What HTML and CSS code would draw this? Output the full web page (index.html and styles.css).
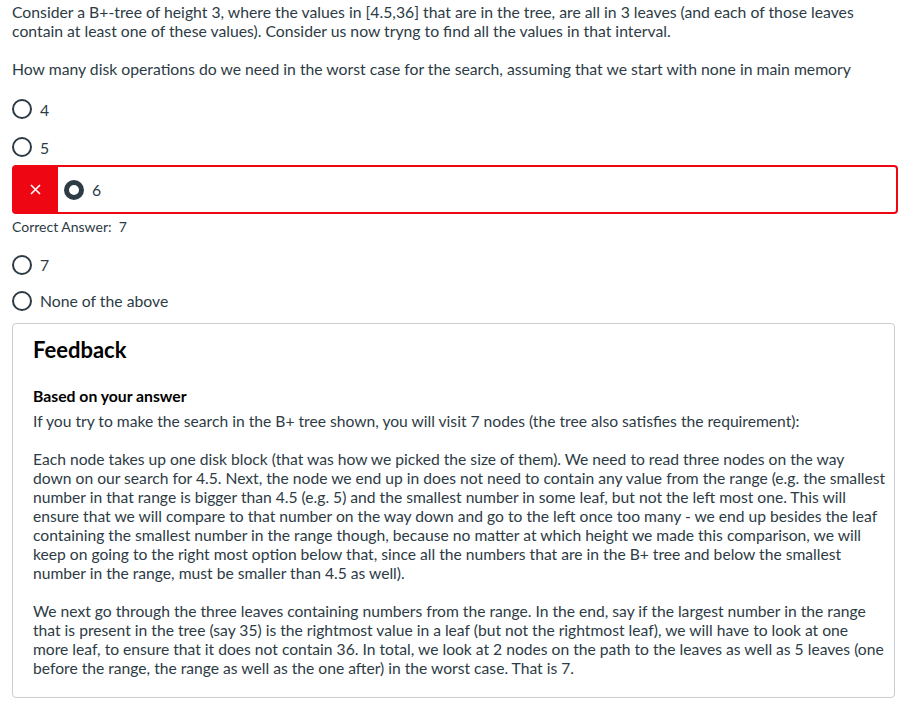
FILE: index.html
```html
<!DOCTYPE html>
<html>
<head>
<meta charset="utf-8">
<link rel="stylesheet" href="styles.css">
</head>
<body>
<div class="quiz">
  <div class="question">
    <p>Consider a B+-tree of height 3, where the values in [4.5,36] that are in the tree, are all in 3 leaves (and each of those leaves contain at least one of these values). Consider us now tryng to find all the values in that interval.</p>
    <p>How many disk operations do we need in the worst case for the search, assuming that we start with none in main memory</p>
  </div>
  <div class="answers">
    <div class="option"><span class="radio"></span><span class="label">4</span></div>
    <div class="option"><span class="radio"></span><span class="label">5</span></div>
    <div class="option wrong">
      <span class="mark"><svg width="11" height="11" viewBox="0 0 11 11"><path d="M1 1 L10 10 M10 1 L1 10" stroke="#ffffff" stroke-width="1.6" fill="none"/></svg></span>
      <span class="radio checked"></span><span class="label">6</span>
    </div>
    <div class="correct">Correct Answer:&nbsp; 7</div>
    <div class="option tight"><span class="radio"></span><span class="label">7</span></div>
    <div class="option tighter"><span class="radio"></span><span class="label">None of the above</span></div>
  </div>
  <div class="feedback">
    <h2>Feedback</h2>
    <h3>Based on your answer</h3>
    <p>If you try to make the search in the B+ tree shown, you will visit 7 nodes (the tree also satisfies the requirement):</p>
    <p>Each node takes up one disk block (that was how we picked the size of them). We need to read three nodes on the way<br>down on our search for 4.5. Next, the node we end up in does not need to contain any value from the range (e.g. the smallest<br>number in that range is bigger than 4.5 (e.g. 5) and the smallest number in some leaf, but not the left most one. This will<br>ensure that we will compare to that number on the way down and go to the left once too many - we end up besides the leaf<br>containing the smallest number in the range though, because no matter at which height we made this comparison, we will<br>keep on going to the right most option below that, since all the numbers that are in the B+ tree and below the smallest<br>number in the range, must be smaller than 4.5 as well).</p>
    <p>We next go through the three leaves containing numbers from the range. In the end, say if the largest number in the range<br>that is present in the tree (say 35) is the rightmost value in a leaf (but not the rightmost leaf), we will have to look at one<br>more leaf, to ensure that it does not contain 36. In total, we look at 2 nodes on the path to the leaves as well as 5 leaves (one<br>before the range, the range as well as the one after) in the worst case. That is 7.</p>
  </div>
</div>
</body>
</html>
```

FILE: styles.css
```css
html, body {
  margin: 0;
  padding: 0;
  background: #ffffff;
}
body {
  font-family: Lato, "Noto Sans", sans-serif;
  font-size: 15.75px;
  line-height: 19px;
  color: #2d3b45;
}
.quiz {
  padding: 2px 7px 0 12px;
}
.question p {
  margin: 0 0 19px 0;
}
.question p:last-child {
  margin-bottom: 0;
}
.answers {
  margin-top: 12px;
}
.option {
  display: flex;
  align-items: center;
  height: 38px;
}
.option.tight {
  height: 37px;
}
.option.tighter {
  height: 35px;
}
.radio {
  box-sizing: border-box;
  width: 20px;
  height: 20px;
  border: 2px solid #2d3b45;
  border-radius: 50%;
  margin-left: 0;
  margin-right: 8px;
  flex: none;
}
.radio.checked {
  border-width: 5px;
}
.option.wrong {
  box-sizing: border-box;
  height: 49px;
  margin-top: -1px;
  border: 2px solid #ee0612;
  border-radius: 4px;
}
.mark {
  align-self: stretch;
  width: 46px;
  margin-left: -2px;
  margin-right: 6px;
  background: #ee0612;
  display: flex;
  align-items: center;
  justify-content: center;
  border-radius: 3px 0 0 3px;
}
.mark svg {
  display: block;
}
.correct {
  font-size: 14px;
  line-height: 18px;
  margin-top: 4px;
  margin-bottom: 10px;
}
.feedback {
  margin-top: 5px;
  border: 1px solid #c7cdd1;
  border-radius: 4px;
  padding: 12px 3px 19px 20px;
  width: 858px;
  font-size: 15.65px;
}
.feedback h2 {
  margin: 0;
  font-size: 22px;
  line-height: 28px;
  font-weight: 700;
  color: #000000;
}
.feedback h3 {
  margin: 22px 0 0 0;
  font-size: 15.75px;
  line-height: 19px;
  font-weight: 700;
  color: #000000;
}
.feedback p {
  margin: 7px 0 19px 0;
}
.feedback p + p {
  margin-top: 0;
}
.feedback p:last-child {
  margin-bottom: 0;
}
```
